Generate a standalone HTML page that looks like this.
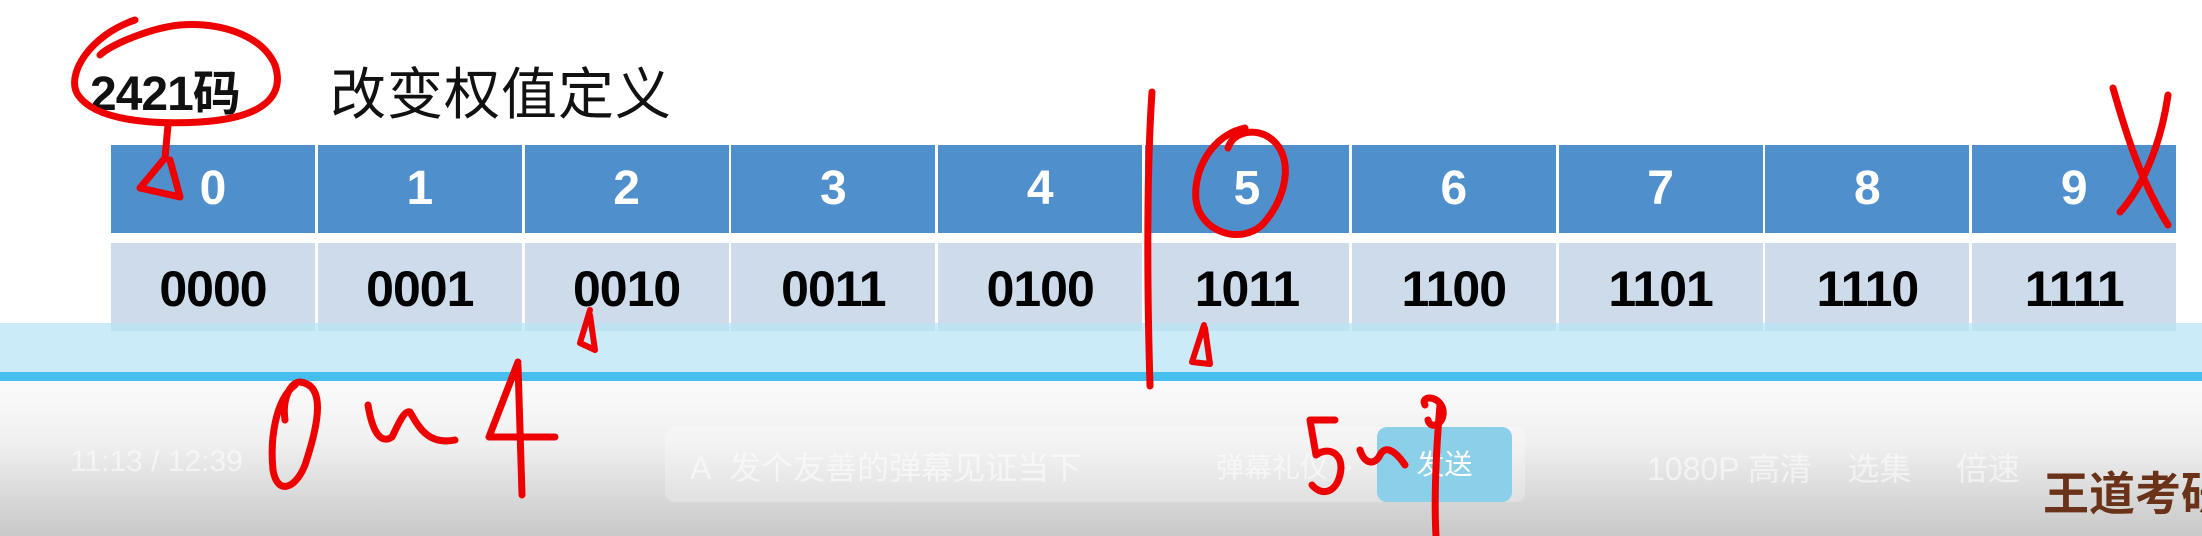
<!DOCTYPE html>
<html><head><meta charset="utf-8"><style>
body{margin:0;width:2202px;height:536px;overflow:hidden;position:relative;background:#fff;font-family:"Liberation Sans","Noto Sans CJK SC",sans-serif}
.abs{position:absolute}
.title{left:90px;top:54px;font-size:48px;color:#111;white-space:nowrap;letter-spacing:-1px;font-weight:bold}
.title2{left:330px;top:50px;font-size:56px;color:#111;letter-spacing:1px}
.hc{position:absolute;top:145px;height:88px;width:204px;background:#4f8fcc;color:#fff;font-weight:bold;font-size:48px;text-align:center;line-height:88px}
.dc{position:absolute;top:243px;height:88px;width:204px;background:#cddbea;color:#000;font-size:50px;text-align:center;line-height:92px;font-weight:bold;letter-spacing:-1px}
.band{left:0;top:323px;width:2202px;height:49px;background:rgba(185,228,246,0.75)}
.line{left:0;top:372px;width:2202px;height:9px;background:#45c0ee}
.bot{left:0;top:381px;width:2202px;height:155px;background:linear-gradient(#fbfbfb,#f0f0f0 40%,#c8c8c8)}
.ctl{color:rgba(255,255,255,0.55);font-size:30px}
</style></head><body>
<div class="abs title">2421码</div>
<div class="abs title2">改变权值定义</div>
<div id="t"></div>
<script>
var h='';var H=['0','1','2','3','4','5','6','7','8','9'];var D=['0000','0001','0010','0011','0100','1011','1100','1101','1110','1111'];
for(var i=0;i<10;i++){var x=111+i*206.8;h+='<div class="hc" style="left:'+x+'px">'+H[i]+'</div><div class="dc" style="left:'+x+'px">'+D[i]+'</div>';}
document.getElementById('t').innerHTML=h;
</script>
<div class="abs band"></div>
<div class="abs line"></div>
<div class="abs bot"></div>
<div class="abs ctl" style="left:70px;top:445px">11:13 / 12:39</div>
<div class="abs" style="left:665px;top:427px;width:860px;height:75px;background:rgba(255,255,255,0.25);border-radius:10px"></div>
<div class="abs ctl" style="left:690px;top:443px;font-size:32px">A&nbsp;&nbsp;发个友善的弹幕见证当下</div>
<div class="abs ctl" style="left:1216px;top:446px;font-size:28px">弹幕礼仪 &gt;</div>
<div class="abs" style="left:1377px;top:427px;width:135px;height:75px;background:#8ccfe9;border-radius:10px;color:#fff;font-size:28px;line-height:75px;text-align:center">发送</div>
<div class="abs ctl" style="left:1647px;top:444px;font-size:32px">1080P 高清&nbsp;&nbsp;&nbsp;&nbsp;选集&nbsp;&nbsp;&nbsp;&nbsp;&nbsp;倍速</div>
<div class="abs" style="left:2043px;top:458px;font-size:46px;color:#6a3218;font-weight:bold;white-space:nowrap">王道考研</div>
<svg class="abs" style="left:0;top:0" width="2202" height="536" fill="none" stroke="#e00" stroke-width="7" stroke-linecap="round" stroke-linejoin="round">
<path d="M135,20 C90,35 65,75 78,95 C95,120 150,125 200,122 C265,118 285,95 275,65 C262,35 220,22 180,25 C150,28 110,45 100,55"/>
<path d="M168,125 L165,158 L140,188 L180,197 L170,160"/>
<path d="M1152,92 C1148,150 1146,250 1150,386"/>
<path d="M1245,128 C1212,135 1193,170 1196,200 C1200,232 1240,245 1262,225 C1290,195 1295,150 1265,135 C1248,128 1232,135 1228,148"/>
<path d="M2113,88 C2125,130 2140,180 2168,225"/><path d="M2168,95 C2160,150 2140,190 2120,212"/>
<path d="M590,310 L580,343 L595,350 L590,315" stroke-width="6"/>
<path d="M1204,325 L1192,362 L1210,364 L1205,328" stroke-width="6"/>
<path d="M295,385 C275,400 270,440 273,470 C277,495 295,490 305,465 C320,420 325,385 300,382 C290,382 282,400 285,420"/>
<path d="M368,405 C372,430 380,445 392,437 C400,420 405,410 410,412 C420,430 430,445 455,440"/>
<path d="M518,362 L489,437 L555,437 M518,365 L522,495"/>
<path d="M1335,420 L1310,420 L1316,455 C1330,445 1345,455 1340,475 C1335,495 1320,495 1312,485"/>
<path d="M1360,450 C1365,465 1375,465 1380,455 C1385,445 1395,450 1405,465"/>
<path d="M1425,405 C1420,395 1440,395 1443,410 C1445,425 1430,430 1428,420 M1440,405 C1436,450 1434,500 1436,536"/>
</svg>
</body></html>
